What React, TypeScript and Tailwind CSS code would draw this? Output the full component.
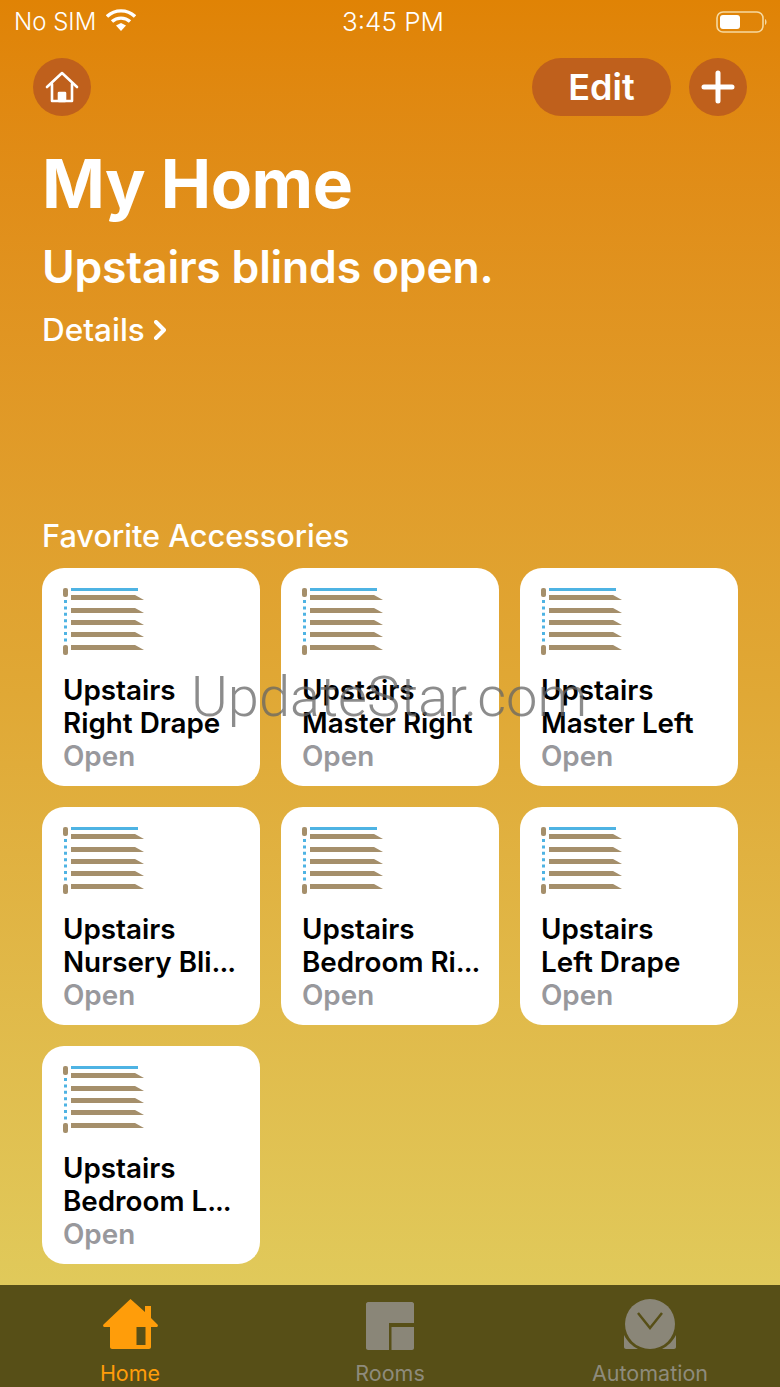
const favorites = [
  ['Upstairs', 'Right Drape'],
  ['Upstairs', 'Master Right'],
  ['Upstairs', 'Master Left'],
  ['Upstairs', 'Nursery Bli', '...'],
  ['Upstairs', 'Bedroom Ri', '...'],
  ['Upstairs', 'Left Drape'],
  ['Upstairs', 'Bedroom L', '...'],
];

function BlindsIcon() {
  return (
    <svg width="84" height="70" viewBox="0 0 84 70" className="block">
      <rect x="0" y="1" width="5" height="9" rx="2" fill="#a58f6b" />
      <rect x="0" y="58" width="5" height="10" rx="2" fill="#a58f6b" />
      <path d="M2.5 13V56" stroke="#4eb3e3" strokeWidth="3" strokeDasharray="3 3.4" fill="none" />
      <rect x="8" y="1" width="67" height="3" fill="#4eb3e3" />
      {[8, 21, 33, 45, 58].map((y) => (
        <path key={y} d={`M8 ${y}H72L81 ${y + 5}H8Z`} fill="#a58f6b" />
      ))}
    </svg>
  );
}

function AccessoryCard({ lines }: { lines: string[] }) {
  return (
    <div className="h-[218px] rounded-[22px] bg-white pl-[21px] pt-[19px]">
      <BlindsIcon />
      <div className="mt-[17px] text-[27.8px] font-semibold leading-[33px] text-black">
        <div>{lines[0]}</div>
        <div className="whitespace-nowrap">
          {lines[1]}
          {lines[2] && <span className="tracking-[-1px]">{lines[2]}</span>}
        </div>
        <div className="text-[#98989c]">Open</div>
      </div>
    </div>
  );
}

function TabItem({ label, active, children }: { label: string; active?: boolean; children: React.ReactNode }) {
  return (
    <div className="flex w-[260px] flex-col items-center pt-[14px]">
      <div className="flex h-[50px] items-center">{children}</div>
      <span className={`mt-[12px] text-[21.5px] leading-[24px] ${active ? 'text-[#ff9d0a]' : 'text-[#8e8b7c]'}`}>{label}</span>
    </div>
  );
}

export default function App() {
  return (
    <div className="relative flex h-[1387px] w-[780px] flex-col overflow-hidden bg-gradient-to-b from-[#e08305] via-[#e0a835] to-[#e0cf60] font-['Inter',sans-serif] text-white">
      {/* Status bar */}
      <div className="flex h-[44px] items-center justify-between pl-[14px] pr-[12px] text-[24px] leading-none">
        <div className="flex w-[204px] items-center gap-[10px]">
          <span className="font-light">No SIM</span>
          <svg width="30" height="24" viewBox="0 0 30 24" className="mb-[4px]">
            <path d="M1 8.5C9 1 21 1 29 8.5" stroke="white" strokeWidth="3.4" fill="none" />
            <path d="M6 13.5C11 9 19 9 24 13.5" stroke="white" strokeWidth="3.4" fill="none" />
            <path d="M10 17.5L15 15L20 17.5L15 23Z" fill="white" />
          </svg>
        </div>
        <span className="text-[26px] font-light">3:45 PM</span>
        <div className="flex w-[200px] justify-end">
          <svg width="52" height="24" viewBox="0 0 52 24">
            <rect x="1" y="2" width="46" height="20" rx="6" fill="none" stroke="#f6d9a0" strokeWidth="1.6" />
            <rect x="4" y="5" width="20" height="14" rx="3" fill="white" />
            <path d="M49 9C51 10 51 14 49 15Z" fill="#f6d9a0" />
          </svg>
        </div>
      </div>

      {/* Toolbar */}
      <div className="mt-[14px] flex items-center justify-between pl-[33px] pr-[33px]">
        <div className="flex h-[58px] w-[58px] items-center justify-center rounded-full bg-[#bf601c]">
          <svg width="36" height="36" viewBox="0 0 36 36" fill="none" stroke="white" strokeWidth="2.6" strokeLinejoin="round" strokeLinecap="round">
            <path d="M3 18L18 4L33 18" />
            <path d="M8 15V32H28V15" />
            <path d="M15 32V24H21V32Z" fill="white" />
          </svg>
        </div>
        <div className="flex items-center gap-[18px]">
          <div className="flex h-[58px] w-[139px] items-center justify-center rounded-full bg-[#bf601c] text-[36px] font-semibold">Edit</div>
          <div className="flex h-[58px] w-[58px] items-center justify-center rounded-full bg-[#bf601c]">
            <svg width="34" height="34" viewBox="0 0 34 34" stroke="white" strokeWidth="5" strokeLinecap="round">
              <path d="M17 3V31M3 17H31" />
            </svg>
          </div>
        </div>
      </div>

      {/* Heading */}
      <div className="pl-[42px]">
        <h1 className="mt-[26px] text-[67.5px] font-bold leading-[84px] tracking-[-0.5px]">My Home</h1>
        <p className="mt-[15px] text-[44.5px] font-semibold leading-[52px] tracking-[-0.2px]">Upstairs blinds open.</p>
        <div className="mt-[18px] flex items-center gap-[9px] text-[31.5px] font-medium leading-[38px]">
          Details
          <svg width="12" height="20" viewBox="0 0 12 20" fill="none" stroke="white" strokeWidth="4" strokeLinecap="round" strokeLinejoin="round">
            <path d="M2 2L10 10L2 18" />
          </svg>
        </div>
      </div>

      {/* Favorites */}
      <h2 className="mt-[168px] pl-[42px] text-[30.7px] font-medium leading-[38px]">Favorite Accessories</h2>
      <div className="mt-[13px] grid grid-cols-[218px_218px_218px] gap-[21px] pl-[42px]">
        {favorites.map((lines, i) => (
          <AccessoryCard key={i} lines={lines} />
        ))}
      </div>

      {/* Tab bar */}
      <div className="mt-auto flex h-[102px] bg-[#574f17]">
        <TabItem label="Home" active>
          <svg width="55" height="50" viewBox="0 0 55 50" fill="#ff9d0a">
            <path d="M27.5 0L42 13V7H48V19L54.5 25.5C55.5 27 54.5 28 53 28H48V48C48 49 47 50 46 50H9C8 50 7 49 7 48V28H2C0.5 28 -0.5 27 0.5 25.5Z" />
            <rect x="33.5" y="28" width="9" height="18" fill="#574f17" />
          </svg>
        </TabItem>
        <TabItem label="Rooms">
          <svg width="48" height="48" viewBox="0 0 48 48" className="mt-[3px]">
            <path d="M2 0H46C47 0 48 1 48 2V21H23V48H2C1 48 0 47 0 46V2C0 1 1 0 2 0Z" fill="#8a8678" />
            <path d="M25.5 25H48V46C48 47 47 48 46 48H25.5Z" fill="#8a8678" />
          </svg>
        </TabItem>
        <TabItem label="Automation">
          <svg width="52" height="50" viewBox="0 0 52 50">
            <circle cx="26" cy="25" r="25" fill="#8a8678" />
            <path d="M0 36C3 42 8 47 14 50H2C1 50 0 49 0 48Z" fill="#8a8678" />
            <path d="M52 36C49 42 44 47 38 50H50C51 50 52 49 52 48Z" fill="#8a8678" />
            <path d="M14 14L26 29L38 14" fill="none" stroke="#574f17" strokeWidth="2.5" />
          </svg>
        </TabItem>
      </div>

      {/* Watermark */}
      <div className="absolute left-[191px] top-[659px] font-['Roboto',sans-serif] text-[56px] font-light leading-[76px] text-[#666666]/75">
        UpdateStar.com
      </div>
    </div>
  );
}
